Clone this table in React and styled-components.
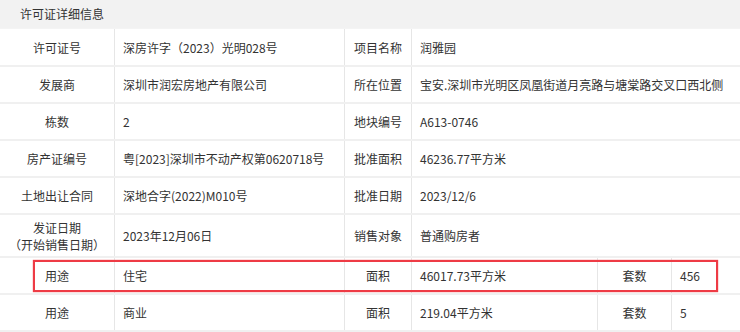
import styled, { createGlobalStyle } from "styled-components"

const GlobalStyle = createGlobalStyle`
  body {
    margin: 0;
    background: #fff;
    font-family: "Microsoft YaHei", "Noto Sans CJK SC", "Noto Sans", sans-serif;
    font-size: 12px;
    color: #333;
  }
`

const rows = [
  { cells: ["许可证号", "深房许字（2023）光明028号", "项目名称", "润雅园"] },
  { cells: ["发展商", "深圳市润宏房地产有限公司", "所在位置", "宝安.深圳市光明区凤凰街道月亮路与塘棠路交叉口西北侧"] },
  { cells: ["栋数", "2", "地块编号", "A613-0746"] },
  { cells: ["房产证编号", "粤[2023]深圳市不动产权第0620718号", "批准面积", "46236.77平方米"] },
  { cells: ["土地出让合同", "深地合字(2022)M010号", "批准日期", "2023/12/6"] },
  { cells: ["发证日期\n（开始销售日期）", "2023年12月06日", "销售对象", "普通购房者"], tall: true },
  { cells: ["用途", "住宅", "面积", "46017.73平方米", "套数", "456"], marked: true },
  { cells: ["用途", "商业", "面积", "219.04平方米", "套数", "5"] },
]

function App() {
  return (
    <>
      <GlobalStyle />
      <Panel>
        <Header>许可证详细信息</Header>
        {rows.map((row, i) => (
          <Row key={i} $wide={row.cells.length === 6} $tall={row.tall}>
            {row.cells.map((text, j) =>
              j % 2 === 0 ? (
                <Label key={j}>{text}</Label>
              ) : (
                <Value key={j} $last={j === row.cells.length - 1}>{text}</Value>
              )
            )}
            {row.marked && <Highlight />}
          </Row>
        ))}
      </Panel>
    </>
  )
}

export default App

const Panel = styled.div`
  width: 740px;
`

const Header = styled.div`
  height: 28px;
  line-height: 28px;
  padding-left: 20px;
  background: #f2f2f2;
  color: #333;
`

const Row = styled.div`
  position: relative;
  display: grid;
  grid-template-columns: ${(p) => (p.$wide ? "115px 230px 67px 186px 74px 1fr" : "115px 230px 67px 1fr")};
  height: ${(p) => (p.$tall ? "41px" : "35px")};
  border-top: 2px solid #f0f0f0;
  &:nth-child(2) {
    border-top: 1px solid #f4f4f4;
    height: 36px;
  }
  &:last-child {
    border-bottom: 2px solid #f0f0f0;
  }
`

const Cell = styled.div`
  display: flex;
  align-items: center;
  border-right: 1px solid #e6e6e6;
  white-space: pre-line;
  line-height: 17px;
`

const Label = styled(Cell)`
  justify-content: center;
  text-align: center;
`

const Value = styled(Cell)`
  padding-left: 8px;
  ${(p) => p.$last && "border-right: none;"}
`

const Highlight = styled.div`
  position: absolute;
  left: 33px;
  top: 2px;
  width: 681px;
  height: 28px;
  border: 2px solid #ee3b45;
  box-shadow: 0 0 1px #ee3b45;
  pointer-events: none;
`
